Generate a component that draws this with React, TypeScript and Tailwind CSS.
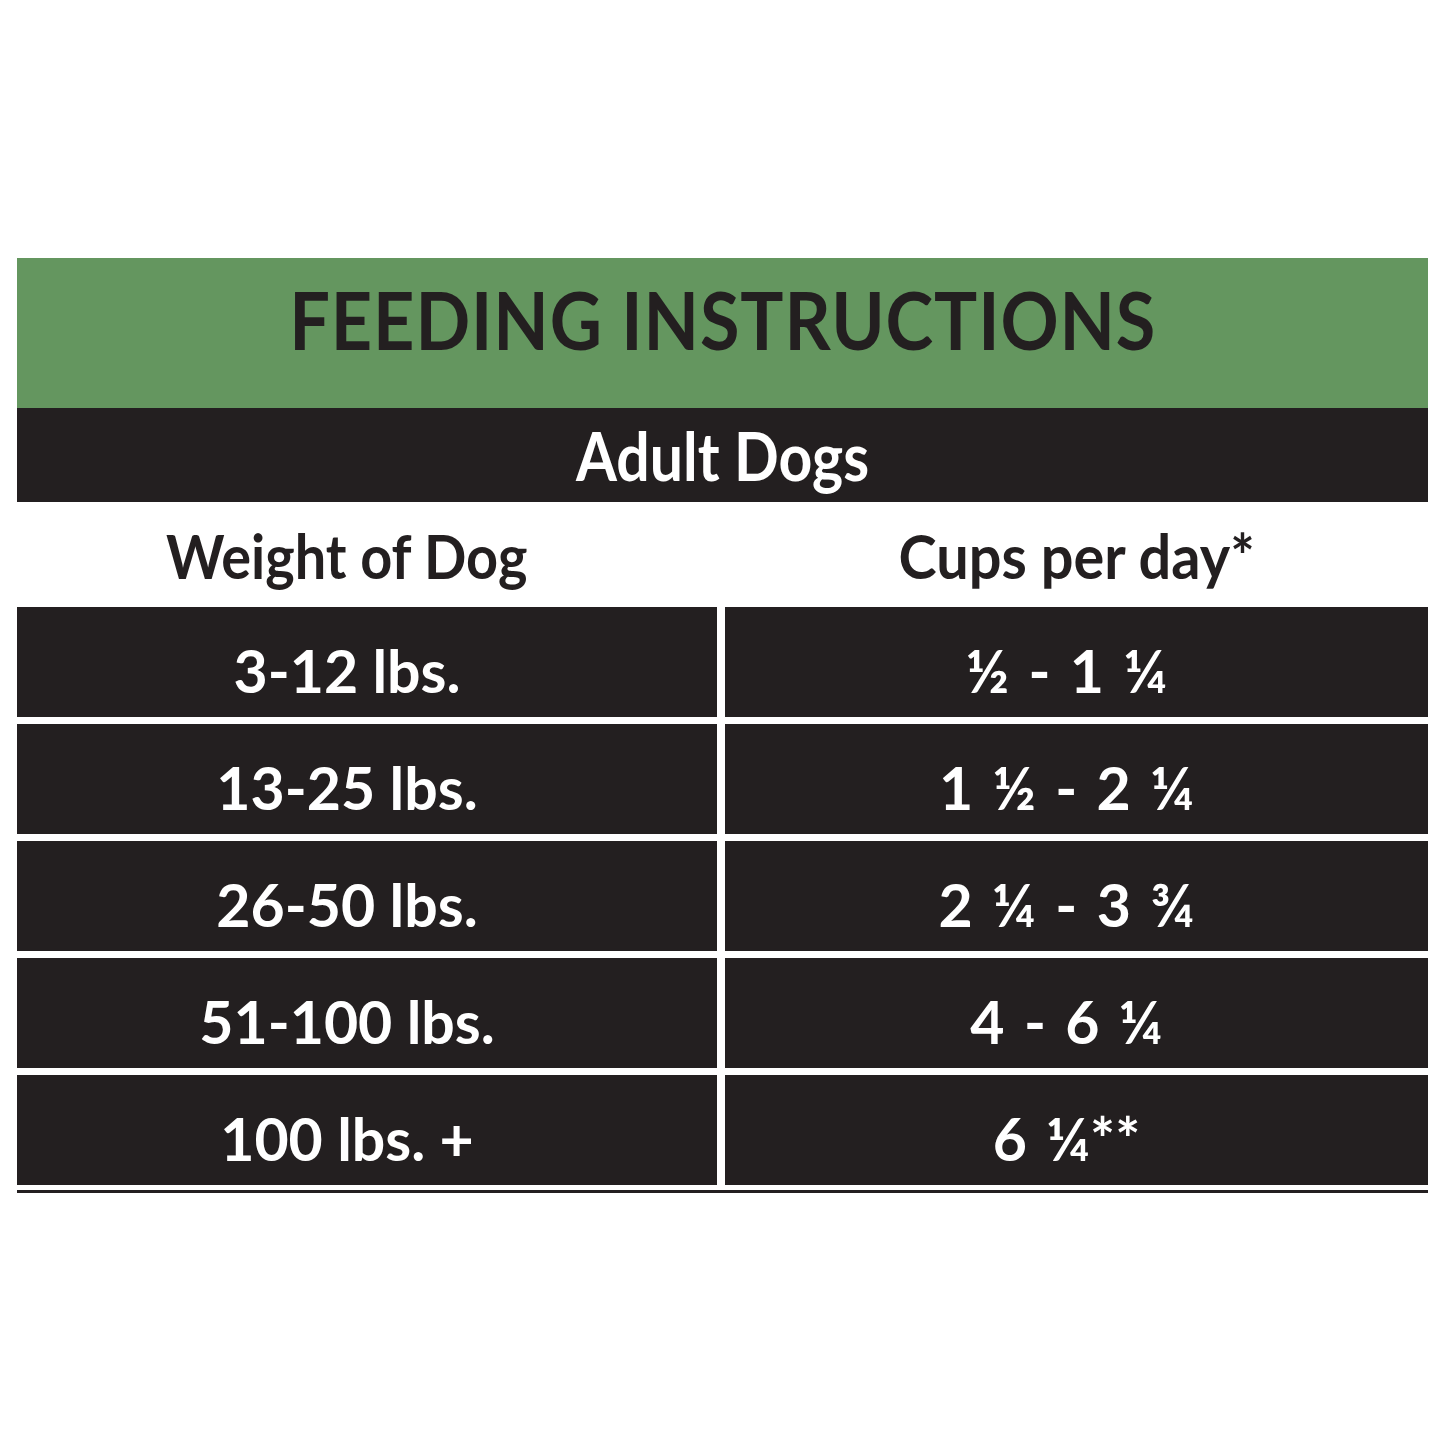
const rows = [
  { weight: "3-12 lbs.", cups: "½ - 1 ¼" },
  { weight: "13-25 lbs.", cups: "1 ½ - 2 ¼" },
  { weight: "26-50 lbs.", cups: "2 ¼ - 3 ¾" },
  { weight: "51-100 lbs.", cups: "4 - 6 ¼" },
  { weight: "100 lbs. +", cups: "6 ¼**" },
];

export default function App() {
  return (
    <div className="w-[1445px] h-[1445px] bg-white font-['Lato',sans-serif] font-bold">
      <div className="pt-[258px] px-[17px]">
        <div className="h-[150px] bg-[#64965f] flex items-center justify-center pb-[28px]">
          <h1 className="text-[80px] leading-none text-[#231f20] tracking-[1px] scale-x-[0.9]">FEEDING INSTRUCTIONS</h1>
        </div>
        <div className="h-[94px] bg-[#231f20] flex items-center justify-center">
          <h2 className="text-[67px] leading-none text-white scale-x-[0.88]">Adult Dogs</h2>
        </div>
        <div className="h-[105px] flex">
          <div className="w-[700px] flex items-center justify-center pr-[40px] text-[62px] leading-none text-[#231f20]">
            <span className="scale-x-[0.9]">Weight of Dog</span>
          </div>
          <div className="flex-1 ml-[8px] flex items-center justify-center text-[62px] leading-none text-[#231f20]">
            <span className="scale-x-[0.93]">Cups per day*</span>
          </div>
        </div>
        <div className="flex flex-col gap-[7px]">
          {rows.map((r) => (
            <div key={r.weight} className="h-[110px] flex gap-[8px]">
              <div className="w-[700px] bg-[#231f20] flex items-center justify-center pr-[40px] pt-[16px] text-[59px] leading-none text-white">
                {r.weight}
              </div>
              <div className="flex-1 bg-[#231f20] flex items-center justify-center pr-[20px] pt-[16px] text-[59px] leading-none text-white [word-spacing:5px]">
                {r.cups}
              </div>
            </div>
          ))}
        </div>
        <div className="mt-[5px] h-[3px] bg-[#231f20]" />
      </div>
    </div>
  );
}
